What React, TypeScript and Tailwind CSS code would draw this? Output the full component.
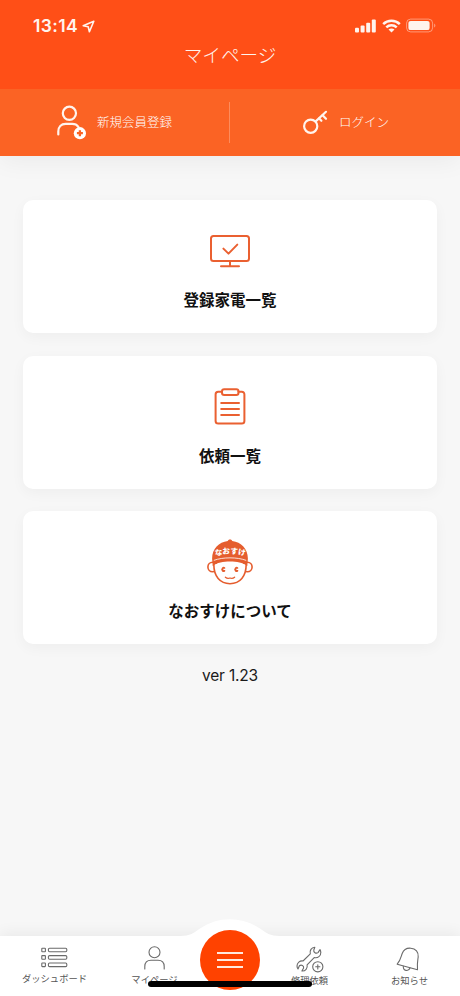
import React from 'react';

const JP = "font-['Noto_Sans_CJK_JP',sans-serif]";

interface MenuCardProps {
    icon: React.ReactNode;
    label: string;
}

function MenuCard({ icon, label }: MenuCardProps) {
    return (
        <button className="flex h-[133px] w-full flex-col items-center rounded-[10px] bg-white pt-[26px] shadow-[0_4px_14px_rgba(0,0,0,0.04)]">
            <span className="flex h-[50px] items-center justify-center">{icon}</span>
            <span className="mt-[12px] text-[15.5px] leading-[22px] font-bold whitespace-nowrap text-[#111]">{label}</span>
        </button>
    );
}

interface NavItemProps {
    icon: React.ReactNode;
    label: string;
    className?: string;
}

function NavItem({ icon, label, className = '' }: NavItemProps) {
    return (
        <button className={`flex flex-col items-center ${className}`}>
            <span className="flex h-[28px] items-center justify-center">{icon}</span>
            <span className="text-[9.3px] leading-[14px] whitespace-nowrap text-[#555]">{label}</span>
        </button>
    );
}

function StatusBar() {
    return (
        <div className="flex h-[40px] items-start justify-between pt-[14px] pr-[24px] pl-[33px] text-[#fff4ee]">
            <div className="flex items-center gap-[4px]">
                <span className="font-['Inter',sans-serif] text-[17.5px] leading-[24px] font-semibold tracking-[0.35px]">13:14</span>
                <svg width="13" height="13" viewBox="0 0 13 13" fill="none" stroke="currentColor" strokeWidth="1.6" strokeLinejoin="round">
                    <path d="M11.8 1.2 L1.2 5.8 L6.2 6.8 L7.4 11.8 Z" />
                </svg>
            </div>
            <div className="flex h-[23px] items-center">
                <svg width="21" height="14" viewBox="0 0 21 14" fill="currentColor">
                    <rect x="0" y="8.8" width="4" height="4.7" rx="1" />
                    <rect x="5.6" y="6.6" width="4" height="6.9" rx="1" />
                    <rect x="11.2" y="3.8" width="4" height="9.7" rx="1" />
                    <rect x="16.8" y="0.6" width="4" height="12.9" rx="1" />
                </svg>
                <svg className="ml-[6px]" width="19" height="14" viewBox="0 0 19 14" fill="none" stroke="currentColor" strokeWidth="2.5">
                    <path d="M1.2 5.2 C5.8 0.7 13.2 0.7 17.8 5.2" />
                    <path d="M4.3 8.4 C7.2 5.6 11.8 5.6 14.7 8.4" />
                    <path d="M9.5 13.6 L6.5 10.6 C8.2 9 10.8 9 12.5 10.6 Z" fill="currentColor" stroke="none" />
                </svg>
                <svg className="ml-[5px]" width="30" height="15" viewBox="0 0 30 15" fill="none">
                    <rect x="0.6" y="1.1" width="26" height="12.8" rx="4" stroke="currentColor" strokeOpacity="0.45" />
                    <rect x="2.4" y="2.9" width="21.2" height="9.2" rx="2.2" fill="currentColor" />
                    <path d="M28.2 5.4 C29.8 6.2 29.8 8.8 28.2 9.6 Z" fill="currentColor" fillOpacity="0.5" />
                </svg>
            </div>
        </div>
    );
}

function UserAddIcon() {
    return (
        <svg width="31" height="36" viewBox="0 0 31 36" fill="none">
            <circle cx="13.4" cy="9.3" r="6.6" stroke="#fff4ee" strokeWidth="2.2" />
            <path d="M2.3 30.4 V27.5 C2.3 22.8 5.2 19.9 9.6 19.9 H16.2 C19 19.9 21.1 21 22.4 22.8" stroke="#fff4ee" strokeWidth="2.2" strokeLinecap="round" />
            <circle cx="23.9" cy="29.2" r="6.1" fill="#fff" />
            <path d="M23.9 26.2 V32.2 M20.9 29.2 H26.9" stroke="#fb6324" strokeWidth="2.3" />
        </svg>
    );
}

function KeyIcon() {
    return (
        <svg width="26" height="25" viewBox="0 0 26 25" fill="none" stroke="#fff4ee" strokeWidth="2.2" strokeLinecap="round">
            <circle cx="8.7" cy="16.2" r="6.6" />
            <path d="M13.4 11.6 L24 1.8" />
            <path d="M17.2 8.4 L19.4 10.8 M20.6 5.2 L24 8.8" />
        </svg>
    );
}

function MonitorIcon() {
    return (
        <svg width="42" height="34" viewBox="0 0 42 34" fill="none" stroke="#ea6031" strokeWidth="2" strokeLinecap="round" strokeLinejoin="round">
            <rect x="2" y="2" width="38" height="25" rx="2.5" />
            <path d="M21 27 V32 M12 32.2 H30" />
            <path d="M14.4 14.6 L19.5 19.6 L28.3 10.6" />
        </svg>
    );
}

function ClipboardIcon() {
    return (
        <svg width="32" height="38" viewBox="0 0 32 38" fill="none" stroke="#ea6031" strokeWidth="2" strokeLinecap="round" strokeLinejoin="round">
            <path d="M8 3.8 H4.2 C2.6 3.8 1.6 4.8 1.6 6.4 V33 C1.6 34.6 2.6 35.6 4.2 35.6 H27.8 C29.4 35.6 30.4 34.6 30.4 33 V6.4 C30.4 4.8 29.4 3.8 27.8 3.8 H24.4" />
            <rect x="8" y="1.2" width="16.5" height="5.8" rx="2.2" />
            <path d="M7.2 15 H25 M7.2 21 H25 M7.2 27 H25" />
        </svg>
    );
}

function MascotIcon() {
    return (
        <svg width="46" height="46" viewBox="0 0 46 46" fill="none">
            {/* ears and face */}
            <circle cx="5.6" cy="28" r="4.7" fill="#fff" stroke="#e55d2e" strokeWidth="1.6" />
            <circle cx="40.4" cy="28" r="4.7" fill="#fff" stroke="#e55d2e" strokeWidth="1.6" />
            <path d="M6.8 25 C6.8 37.5 13 44.7 23 44.7 C33 44.7 39.2 37.5 39.2 25" fill="#fff" stroke="#e55d2e" strokeWidth="1.6" />
            {/* cap */}
            <path d="M20.8 2 C20.8 -0.1 25.2 -0.1 25.2 2 C34.2 3 40.8 9.8 40.9 19.5 L40.3 27 C35.5 23.6 30 22.6 23 22.6 C16 22.6 10.5 23.6 5.7 27 L5.1 19.5 C5.2 9.8 11.8 3 20.8 2 Z" fill="#e55d2e" />
            <path d="M6.8 21.4 C15.5 18 30.5 18 39.2 21.4" stroke="#fff" strokeWidth="0.8" />
            <g fill="#fff" fontSize="7.6" fontWeight="900" textAnchor="middle">
                <text x="11.9" y="16.2" transform="rotate(-9 11.9 16.2)">な</text>
                <text x="19.4" y="14.9" transform="rotate(-3 19.4 14.9)">お</text>
                <text x="27" y="14.9" transform="rotate(3 27 14.9)">す</text>
                <text x="34.4" y="16.2" transform="rotate(9 34.4 16.2)">け</text>
            </g>
            {/* eyes */}
            <path d="M18.2 28.6 A2.3 2.5 0 1 0 18.2 32.2 L18.2 31 H16.4 V29.8 H18.2 Z" fill="#e55d2e" />
            <path d="M31.2 28.6 A2.3 2.5 0 1 0 31.2 32.2 L31.2 31 H29.4 V29.8 H31.2 Z" fill="#e55d2e" />
            <path d="M18.4 38.2 Q20.5 40.1 23 39 Q25.5 40.1 27.6 38.2" stroke="#e55d2e" strokeWidth="1.3" strokeLinecap="round" />
        </svg>
    );
}

function ListIcon() {
    return (
        <svg width="27" height="21" viewBox="0 0 27 21" fill="none" stroke="#6a6a6a" strokeWidth="1.1">
            {[1.2, 8.6, 16].map(y => (
                <React.Fragment key={y}>
                    <rect x="0.8" y={y} width="3.6" height="3.6" rx="0.5" />
                    <rect x="7.4" y={y} width="18.4" height="3.6" rx="1.2" />
                </React.Fragment>
            ))}
        </svg>
    );
}

function UserIcon() {
    return (
        <svg width="21" height="24" viewBox="0 0 21 24" fill="none" stroke="#6a6a6a" strokeWidth="1.1" strokeLinecap="round">
            <circle cx="10.5" cy="6.2" r="5.5" />
            <path d="M0.8 23 V20.6 C0.8 16.8 3.2 14.3 7 14.3 H14 C17.8 14.3 20.2 16.8 20.2 20.6 V23" />
        </svg>
    );
}

function RepairIcon() {
    return (
        <svg width="28" height="27" viewBox="0 0 28 27" fill="none" stroke="#6a6a6a" strokeWidth="1.1" strokeLinecap="round" strokeLinejoin="round">
            <path d="M18.8 1.2 C15.4 1.4 13.4 4.6 14.3 7.8 L7 15 C3.8 14.5 1 16.8 1 20 C1 21.2 1.4 22.2 2 23 L3.4 19.8 C5.4 18.2 8 19.8 7.6 22 L5.9 25 C9.4 25.3 11.9 22.3 11.1 18.8 L18.2 11.6 C21.8 12.5 25 9.8 24.8 6.4 C24.8 5.3 24.5 4.4 24 3.6 L22 6.6 C20 8 17.3 6.4 17.8 4 Z" />
            <circle cx="21.8" cy="20.8" r="5.1" />
            <path d="M21.8 18.7 V22.9 M19.7 20.8 H23.9" />
        </svg>
    );
}

function BellIcon() {
    return (
        <svg className="mr-[4px]" width="24" height="25" viewBox="0 0 24 25" fill="none" stroke="#6a6a6a" strokeWidth="1.1" strokeLinecap="round" strokeLinejoin="round">
            <path d="M6.2 6.5 C7.6 2.8 11 0.9 14.8 1.2 C19.6 1.5 22.8 5.2 22.2 10 C21.8 13.2 20.9 15.9 21.5 22.8 L1.2 17.2 C5 12.6 5 9.5 6.2 6.5 Z" />
            <path d="M7.3 19.2 C7.1 24.2 12.6 24.8 14 21" />
        </svg>
    );
}

export default function App() {
    return (
        <div className={`${JP} relative flex h-[996px] w-[460px] flex-col overflow-hidden bg-[#f7f7f7]`}>
            <header className="relative z-10 h-[89px] shrink-0 bg-[#ff4f17]">
                <StatusBar />
                <h1 className="text-center text-[18.6px] leading-[28px] font-light text-[#fff4ee]">マイページ</h1>
            </header>

            {/* account actions */}
            <div className="flex h-[67px] shrink-0 items-center bg-[#fb6324] pb-[1px] text-[12.5px] font-light text-white shadow-[0_6px_24px_rgba(0,0,0,0.05)]">
                <button className="flex h-[41px] w-[230px] items-center border-r border-[#fd8c5c] pl-[56px]">
                    <UserAddIcon />
                    <span className="ml-[10px]">新規会員登録</span>
                </button>
                <button className="flex h-[41px] w-[230px] items-center pl-[72px]">
                    <KeyIcon />
                    <span className="ml-[11px]">ログイン</span>
                </button>
            </div>

            <main className="flex flex-1 flex-col items-center gap-[22.5px] px-[23px] pt-[44px]">
                <MenuCard icon={<MonitorIcon />} label="登録家電一覧" />
                <MenuCard icon={<ClipboardIcon />} label="依頼一覧" />
                <MenuCard icon={<MascotIcon />} label="なおすけについて" />
                <p className="-mt-[2px] font-['Inter',sans-serif] text-[15.5px] leading-[22px] tracking-[-0.2px] text-[#1a1a1a]">ver 1.23</p>
            </main>

            <nav className="relative flex h-[60px] shrink-0 items-start bg-white pt-[7px] shadow-[0_-3px_14px_rgba(0,0,0,0.06)]">
                {/* raised hump behind the menu button */}
                <svg className="absolute -top-[17px] left-[180px]" width="100" height="20" viewBox="0 0 100 20">
                    <path d="M0 20 V17 C10 17 14 14 20 9.5 C38 -3 62 -3 80 9.5 C86 14 90 17 100 17 V20 Z" fill="#fff" />
                </svg>
                <NavItem icon={<ListIcon />} label="ダッシュボード" className="w-[109px]" />
                <NavItem icon={<UserIcon />} label="マイページ" className="w-[91px] pt-[1px]" />
                <div className="w-[60px]">
                    <button className="relative -mt-[13px] flex h-[60px] w-[60px] flex-col items-center justify-center gap-[5px] rounded-full bg-[#ff4200]">
                        <span className="h-[2px] w-[26px] bg-[#ffe9df]" />
                        <span className="h-[2px] w-[26px] bg-[#ffe9df]" />
                        <span className="h-[2px] w-[26px] bg-[#ffe9df]" />
                    </button>
                </div>
                <NavItem icon={<RepairIcon />} label="修理依頼" className="w-[99px] pt-[2px]" />
                <NavItem icon={<BellIcon />} label="お知らせ" className="w-[101px] pt-[2px]" />
            </nav>

            {/* home indicator */}
            <div className="absolute bottom-[9px] left-[148px] h-[6px] w-[164px] rounded-full bg-black" />
        </div>
    );
}
